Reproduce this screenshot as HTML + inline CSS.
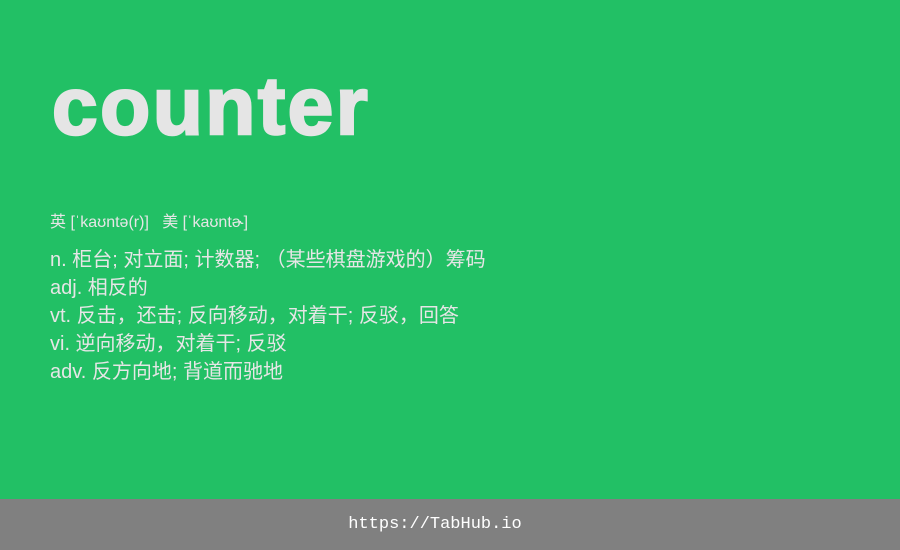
<!DOCTYPE html>
<html><head><meta charset="utf-8"><style>
html,body{margin:0;padding:0;width:900px;height:550px;overflow:hidden;background:#22c065;}
body{position:relative;font-family:"Liberation Sans","Noto Sans CJK SC",sans-serif;color:#e6e6e6;}
.w{position:absolute;left:52px;top:57px;font-size:82px;font-weight:bold;line-height:100px;color:#e5e5e5;letter-spacing:2.5px;-webkit-text-stroke:2.5px #e5e5e5;}
.p{position:absolute;left:50px;top:213px;font-size:16px;line-height:20px;}
.d{position:absolute;left:50px;top:246px;font-size:20px;line-height:28px;}
.f{position:absolute;left:0;top:499px;width:900px;height:51px;background:#808080;color:#fff;font-family:"Liberation Mono",monospace;font-size:17px;line-height:51px;text-align:center;}
.f span{position:relative;left:-15px;}
</style></head><body>
<div class="w">counter</div>
<div class="p">英 [ˈkaʊntə(r)]&nbsp;&nbsp;&nbsp;美 [ˈkaʊntɚ]</div>
<div class="d">n. 柜台; 对立面; 计数器; （某些棋盘游戏的）筹码<br>adj. 相反的<br>vt. 反击，还击; 反向移动，对着干; 反驳，回答<br>vi. 逆向移动，对着干; 反驳<br>adv. 反方向地; 背道而驰地</div>
<div class="f"><span>https://TabHub.io</span></div>
</body></html>
